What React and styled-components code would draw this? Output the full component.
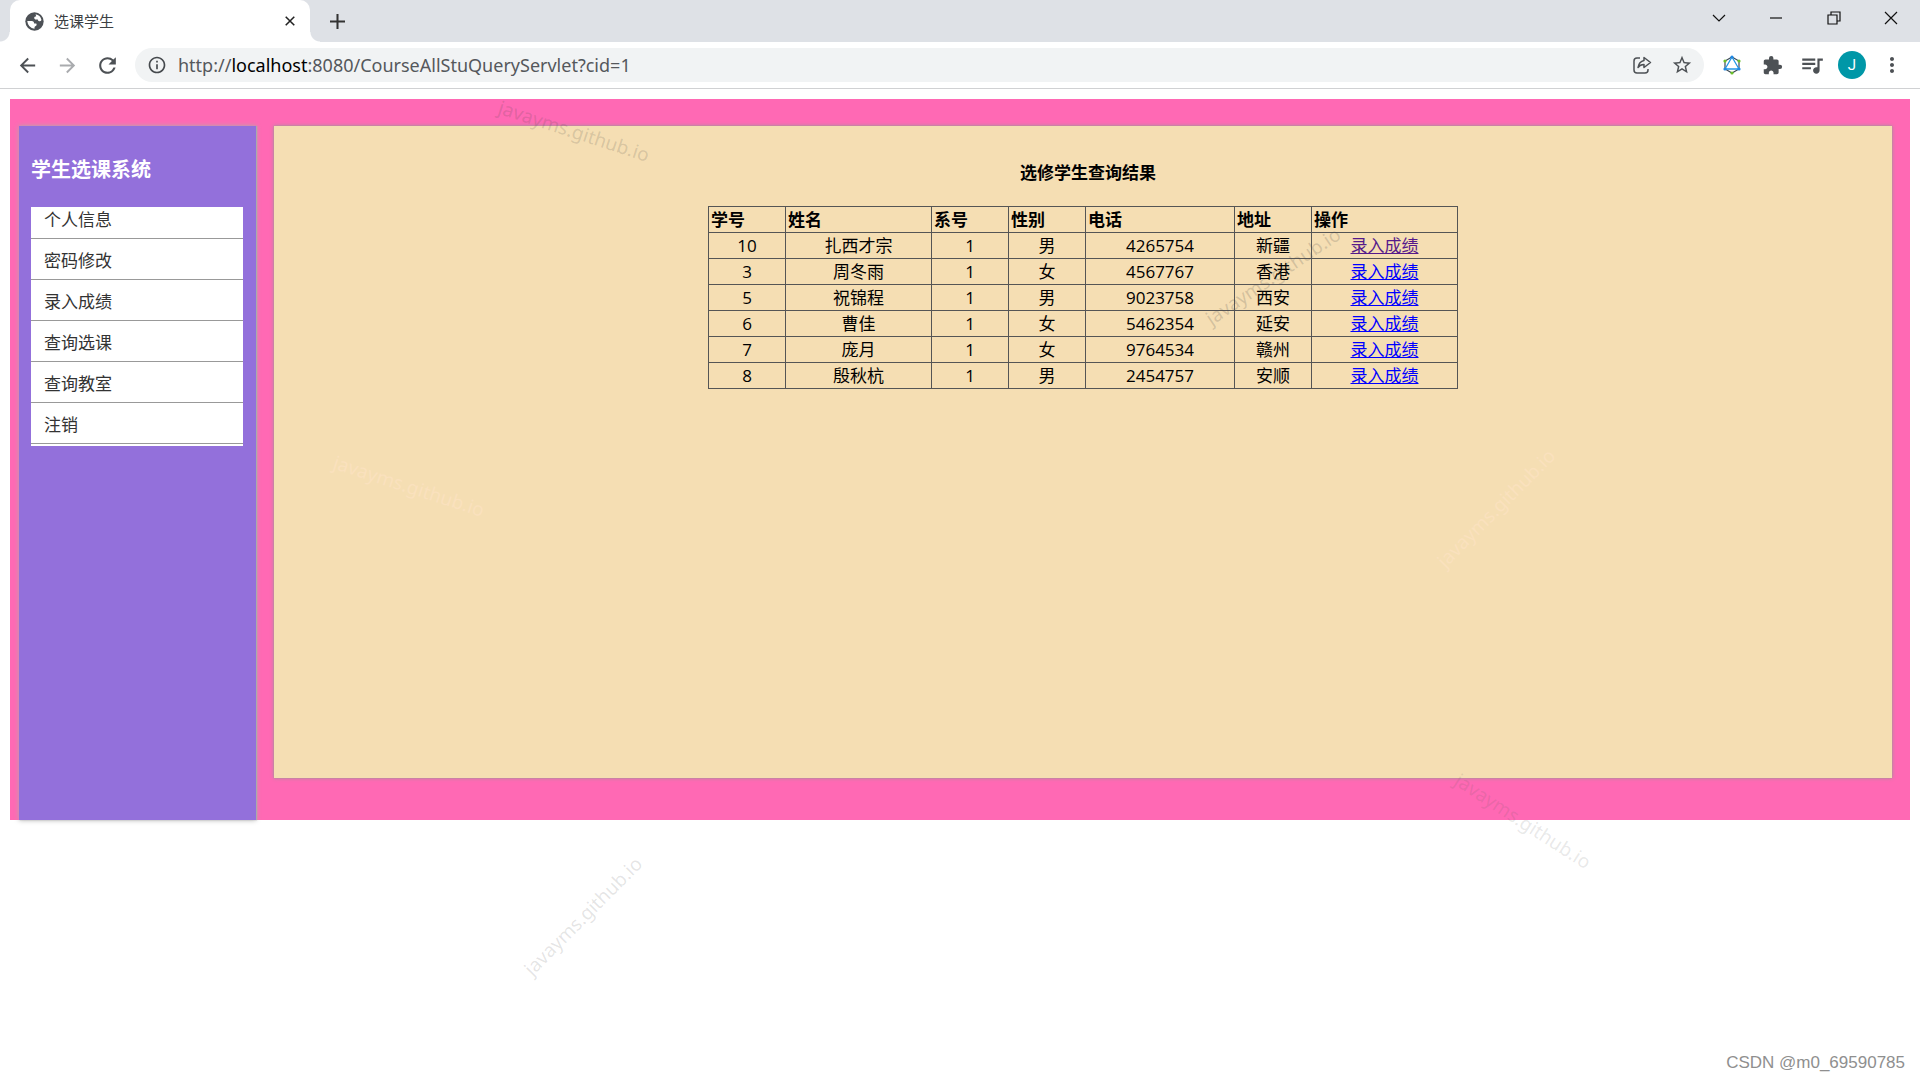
import React from "react";
import styled, { createGlobalStyle } from "styled-components";
import {
  MdArrowBack,
  MdArrowForward,
  MdRefresh,
  MdInfoOutline,
  MdStarBorder,
  MdExtension,
  MdQueueMusic,
  MdMoreVert,
} from "react-icons/md";

const GlobalStyle = createGlobalStyle`
  * {
    box-sizing: border-box;
  }
  body {
    margin: 0;
    background: #fff;
    color: #000;
    font-family: "Open Sans", "Noto Sans CJK SC", sans-serif;
    font-size: 17px;
    line-height: 24px;
  }
`;

/* ################################ BROWSER ################################*/
const Page = styled.div`
  position: relative;
  min-height: 100vh;
  overflow: hidden;
`;

const TabStrip = styled.div`
  display: flex;
  height: 42px;
  padding-left: 10px;
  background: #dee1e6;
`;

const Tab = styled.div`
  position: relative;
  display: flex;
  align-items: center;
  width: 300px;
  padding: 0 10px 0 15px;
  border-radius: 10px 10px 0 0;
  background: #fff;
  color: #3c4043;
  font-size: 15px;

  /* flared bottom corners */
  &::before,
  &::after {
    content: "";
    position: absolute;
    bottom: 0;
    width: 10px;
    height: 10px;
  }
  &::before {
    left: -10px;
    background: radial-gradient(circle at 0 0, #dee1e6 9px, #fff 10px);
  }
  &::after {
    right: -10px;
    background: radial-gradient(circle at 100% 0, #dee1e6 9px, #fff 10px);
  }
`;

const TabTitle = styled.span`
  flex: 1;
  margin-left: 10px;
`;

const IconButton = styled.button`
  display: flex;
  align-items: center;
  justify-content: center;
  width: ${(props) => props.$width || 40}px;
  height: ${(props) => props.$height || 34}px;
  padding: 0;
  border: 0;
  background: none;
  color: ${(props) => props.$color || "#4d5155"};
`;

const WindowButtons = styled.div`
  display: flex;
  margin-left: auto;
`;

const Toolbar = styled.div`
  display: flex;
  align-items: center;
  height: 47px;
  padding: 0 8px 0 7px;
  border-bottom: 1px solid #d0d1d3;
`;

const AddressBar = styled.div`
  display: flex;
  flex: 1;
  align-items: center;
  height: 34px;
  margin: 0 8px;
  padding: 0 2px 0 12px;
  border-radius: 17px;
  background: #f1f3f4;
  color: #45494d;
`;

const Url = styled.span`
  flex: 1;
  margin-left: 11px;
  color: #55585c;
  font-family: "Noto Sans", sans-serif;
  font-size: 18px;

  b {
    color: #000;
    font-weight: 400;
  }
`;

const Avatar = styled.button`
  width: 28px;
  height: 28px;
  margin: 0 6px;
  padding: 0;
  border: 0;
  border-radius: 50%;
  background: #0097a7;
  color: #fff;
  font-family: Roboto, sans-serif;
  font-size: 15px;
`;

/* ################################ LAYOUT ################################*/
const Frame = styled.div`
  display: flex;
  align-items: flex-start;
  margin: 10px 10px 0;
  padding: 27px 18px 0 9px;
  background: hotpink;
`;

const Sidebar = styled.nav`
  width: 237px;
  min-height: 694px;
  padding: 30px 13px 30px 12px;
  background: mediumpurple;
  box-shadow: 1px 0 1px #aaa, 0 0 5px #aaa;
`;

const SidebarTitle = styled.h1`
  margin: 0;
  color: #fff;
  font-size: 20px;
  line-height: 28px;
`;

const Menu = styled.ul`
  margin: 23px 0 0;
  padding: 0 0 2px;
  background: #fff;
  list-style: none;
`;

const MenuItem = styled.li`
  height: 41px;
  padding: 10px 0 0 13px;
  border-bottom: 1px solid #999;

  &:first-child {
    height: 32px;
    padding-top: 1px;
  }
`;

const MenuLink = styled.a`
  color: #333;
  text-decoration: none;
`;

const Content = styled.main`
  flex: 1;
  min-height: 652px;
  margin: 0 0 42px 18px;
  padding-top: 35px;
  background: wheat;
  box-shadow: 0 0 1px #999, 0 0 4px #999;
`;

const ContentTitle = styled.h2`
  margin: 0 0 21px 10px;
  font-size: 17px;
  line-height: 24px;
  text-align: center;
`;

const StudentTable = styled.table`
  margin: 0 auto;
  border-collapse: collapse;
`;

const cell = `
  height: 26px;
  padding: 0 2px;
  border: 1px solid #555;
  line-height: 22px;
`;

const HeadCell = styled.th`
  ${cell}
  width: ${(props) => props.$width}px;
  text-align: left;
`;

const Cell = styled.td`
  ${cell}
  text-align: center;
`;

const GradeLink = styled.a`
  color: ${(props) => (props.$visited ? "#551a8b" : "#0000ff")};
`;

/* ################################ WATERMARKS ################################*/
const Watermark = styled.span`
  position: absolute;
  left: ${(props) => props.$x}px;
  top: ${(props) => props.$y}px;
  color: ${(props) => props.$color};
  font-family: "Noto Sans", sans-serif;
  font-size: 19px;
  line-height: 24px;
  white-space: nowrap;
  transform: translate(-50%, -50%) rotate(${(props) => props.$angle}deg);
  pointer-events: none;
`;

const Credit = styled.footer`
  position: absolute;
  right: 15px;
  bottom: 5px;
  color: #8f8f8f;
  font-family: "Liberation Sans", sans-serif;
  font-size: 17px;
`;

const menu = ["个人信息", "密码修改", "录入成绩", "查询选课", "查询教室", "注销"];

const columns = [
  { title: "学号", width: 77 },
  { title: "姓名", width: 146 },
  { title: "系号", width: 77 },
  { title: "性别", width: 77 },
  { title: "电话", width: 149 },
  { title: "地址", width: 77 },
  { title: "操作", width: 146 },
];

const students = [
  ["10", "扎西才宗", "1", "男", "4265754", "新疆"],
  ["3", "周冬雨", "1", "女", "4567767", "香港"],
  ["5", "祝锦程", "1", "男", "9023758", "西安"],
  ["6", "曹佳", "1", "女", "5462354", "延安"],
  ["7", "庞月", "1", "女", "9764534", "赣州"],
  ["8", "殷秋杭", "1", "男", "2454757", "安顺"],
];

const watermarks = [
  { x: 574, y: 131, angle: 18, color: "rgba(70, 70, 70, 0.18)" },
  { x: 1273, y: 276, angle: -34, color: "rgba(70, 70, 70, 0.2)" },
  { x: 409, y: 486, angle: 18, color: "rgba(255, 228, 200, 0.5)" },
  { x: 1496, y: 508, angle: -45, color: "rgba(255, 228, 200, 0.5)" },
  { x: 1523, y: 821, angle: 33, color: "rgba(90, 90, 90, 0.14)" },
  { x: 583, y: 916, angle: -45, color: "rgba(90, 90, 90, 0.16)" },
];

const Stroke = ({ size = 14, width = 1, children }) => (
  <svg
    width={size}
    height={size}
    viewBox="0 0 14 14"
    fill="none"
    stroke="currentColor"
    strokeWidth={width}
    aria-hidden="true"
  >
    {children}
  </svg>
);

const GlobeIcon = () => (
  <svg width="19" height="19" viewBox="0 0 18 18" aria-hidden="true">
    <circle cx="9" cy="9" r="8.7" fill="#4d5156" />
    <path
      d="M10 2.2q4.6.8 5.6 5.3-.6 1.4-2 1.2-1.4-.3-1.5-1.7H9.6q-1.2-.5-.8-2.2L10.6 4z"
      fill="#fff"
    />
    <path
      d="M2.1 8.6h4.6q2 .2 2 2.2h2q1 1.4-.4 2.5-1.2.2-1.3 1.3v1.3Q3 15.3 2.1 8.6z"
      fill="#fff"
    />
  </svg>
);

const ShareIcon = () => (
  <svg
    width="20"
    height="20"
    viewBox="0 0 20 20"
    fill="none"
    stroke="currentColor"
    strokeWidth="1.5"
    strokeLinejoin="round"
    aria-hidden="true"
  >
    <path d="M8 3H5Q2 3 2 6v9q0 3 3 3h8q3 0 3-3v-1" />
    <path d="M12 2.5l6.5 5-6.5 5v-3q-4 0-6 3 1-6 6-7z" />
  </svg>
);

const HexagonIcon = () => (
  <svg width="20" height="20" viewBox="0 0 20 20" fill="none" aria-hidden="true">
    <path d="M10 2l7 4v8l-7 4-7-4V6z" stroke="#3b4a55" strokeWidth="1.2" />
    <path d="M10 2l7 12H3z" stroke="#2196e8" strokeWidth="1.3" />
    <g fill="#1e88e5">
      <circle cx="10" cy="2" r="1.6" />
      <circle cx="17" cy="14" r="1.6" />
      <circle cx="3" cy="14" r="1.6" />
    </g>
    <g fill="#6abf2a">
      <circle cx="10" cy="18" r="1.6" />
      <circle cx="17" cy="6" r="1.6" />
      <circle cx="3" cy="6" r="1.6" />
    </g>
  </svg>
);

const BrowserBar = () => (
  <header>
    <TabStrip>
      <Tab>
        <GlobeIcon />
        <TabTitle>选课学生</TabTitle>
        <IconButton $width={20} $height={20} $color="#222" aria-label="关闭标签页">
          <Stroke size={12} width={1.8}>
            <path d="M2 2l10 10M12 2L2 12" />
          </Stroke>
        </IconButton>
      </Tab>
      <IconButton $width={55} $height={42} $color="#333" aria-label="新标签页">
        <Stroke size={15} width={1.9}>
          <path d="M7 0v14M0 7h14" />
        </Stroke>
      </IconButton>
      <WindowButtons>
        <IconButton $width={56} $height={36} $color="#111" aria-label="搜索标签页">
          <Stroke width={1.2}>
            <path d="M1 4l6 6 6-6" />
          </Stroke>
        </IconButton>
        <IconButton $width={58} $height={36} $color="#111" aria-label="最小化">
          <Stroke width={1.2}>
            <path d="M1 7h12" />
          </Stroke>
        </IconButton>
        <IconButton $width={57} $height={36} $color="#111" aria-label="还原">
          <Stroke width={1.2}>
            <path d="M1 4h9v9H1zM4 4V1h9v9h-3" />
          </Stroke>
        </IconButton>
        <IconButton $width={58} $height={36} $color="#111" aria-label="关闭">
          <Stroke width={1.2}>
            <path d="M1 1l12 12M13 1L1 13" />
          </Stroke>
        </IconButton>
      </WindowButtons>
    </TabStrip>
    <Toolbar>
      <IconButton aria-label="后退">
        <MdArrowBack size={23} />
      </IconButton>
      <IconButton $color="#a9abae" aria-label="前进">
        <MdArrowForward size={23} />
      </IconButton>
      <IconButton aria-label="刷新">
        <MdRefresh size={25} />
      </IconButton>
      <AddressBar>
        <MdInfoOutline size={20} />
        <Url>
          http://<b>localhost</b>:8080/CourseAllStuQueryServlet?cid=1
        </Url>
        <IconButton aria-label="分享">
          <ShareIcon />
        </IconButton>
        <IconButton aria-label="收藏">
          <MdStarBorder size={22} />
        </IconButton>
      </AddressBar>
      <IconButton aria-label="扩展">
        <HexagonIcon />
      </IconButton>
      <IconButton aria-label="扩展程序">
        <MdExtension size={21} />
      </IconButton>
      <IconButton aria-label="媒体控制">
        <MdQueueMusic size={26} />
      </IconButton>
      <Avatar>J</Avatar>
      <IconButton aria-label="更多">
        <MdMoreVert size={24} />
      </IconButton>
    </Toolbar>
  </header>
);

const App = () => (
  <Page>
    <GlobalStyle />
    <BrowserBar />
    <Frame>
      <Sidebar>
        <SidebarTitle>学生选课系统</SidebarTitle>
        <Menu>
          {menu.map((item) => (
            <MenuItem key={item}>
              <MenuLink href="#">{item}</MenuLink>
            </MenuItem>
          ))}
        </Menu>
      </Sidebar>
      <Content>
        <ContentTitle>选修学生查询结果</ContentTitle>
        <StudentTable>
          <thead>
            <tr>
              {columns.map((column) => (
                <HeadCell key={column.title} $width={column.width}>
                  {column.title}
                </HeadCell>
              ))}
            </tr>
          </thead>
          <tbody>
            {students.map((student, index) => (
              <tr key={student[0]}>
                {student.map((value, i) => (
                  <Cell key={i}>{value}</Cell>
                ))}
                <Cell>
                  <GradeLink href="#" $visited={index === 0}>
                    录入成绩
                  </GradeLink>
                </Cell>
              </tr>
            ))}
          </tbody>
        </StudentTable>
      </Content>
    </Frame>
    {watermarks.map((mark) => (
      <Watermark
        key={mark.x}
        $x={mark.x}
        $y={mark.y}
        $angle={mark.angle}
        $color={mark.color}
      >
        javayms.github.io
      </Watermark>
    ))}
    <Credit>CSDN @m0_69590785</Credit>
  </Page>
);

export default App;
